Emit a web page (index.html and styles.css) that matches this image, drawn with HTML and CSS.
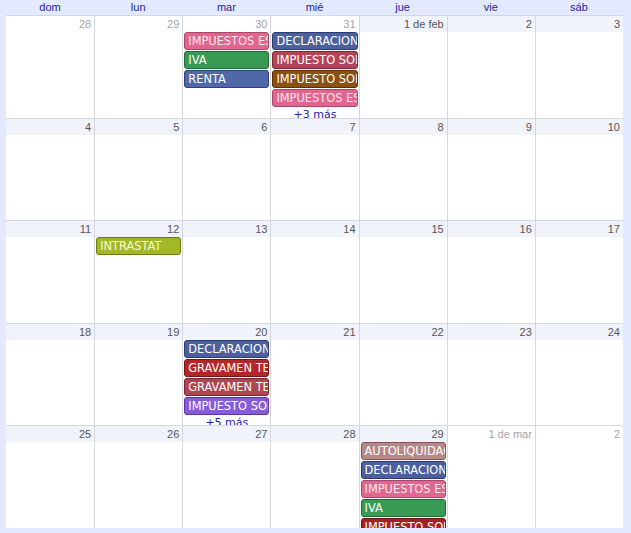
FILE: index.html
```html
<!DOCTYPE html>
<html lang="es">
<head>
<meta charset="utf-8">
<title>Calendario</title>
<link rel="stylesheet" href="styles.css">
</head>
<body>
<div class="cal">
  <div class="head">
    <div>dom</div><div>lun</div><div>mar</div><div>mié</div><div>jue</div><div>vie</div><div>sáb</div>
  </div>
  <div class="weeks">
    <div class="week">
      <div class="day out"><div class="num">28</div></div>
      <div class="day out"><div class="num">29</div></div>
      <div class="day out"><div class="num">30</div>
        <div class="ev pink">IMPUESTOS ESPECIALES</div>
        <div class="ev green">IVA</div>
        <div class="ev blue">RENTA</div>
      </div>
      <div class="day out"><div class="num">31</div>
        <div class="ev navy">DECLARACIONES INFORMATIVAS</div>
        <div class="ev crimson">IMPUESTO SOBRE SOCIEDADES</div>
        <div class="ev brown">IMPUESTO SOBRE LA RENTA</div>
        <div class="ev pink">IMPUESTOS ESPECIALES</div>
        <div class="more">+3 más</div>
      </div>
      <div class="day"><div class="num">1 de feb</div></div>
      <div class="day"><div class="num">2</div></div>
      <div class="day"><div class="num">3</div></div>
    </div>
    <div class="week">
      <div class="day"><div class="num">4</div></div>
      <div class="day"><div class="num">5</div></div>
      <div class="day"><div class="num">6</div></div>
      <div class="day"><div class="num">7</div></div>
      <div class="day"><div class="num">8</div></div>
      <div class="day"><div class="num">9</div></div>
      <div class="day"><div class="num">10</div></div>
    </div>
    <div class="week">
      <div class="day"><div class="num">11</div></div>
      <div class="day"><div class="num">12</div>
        <div class="ev olive">INTRASTAT</div>
      </div>
      <div class="day"><div class="num">13</div></div>
      <div class="day"><div class="num">14</div></div>
      <div class="day"><div class="num">15</div></div>
      <div class="day"><div class="num">16</div></div>
      <div class="day"><div class="num">17</div></div>
    </div>
    <div class="week">
      <div class="day"><div class="num">18</div></div>
      <div class="day"><div class="num">19</div></div>
      <div class="day"><div class="num">20</div>
        <div class="ev navy">DECLARACIONES INFORMATIVAS</div>
        <div class="ev red">GRAVAMEN TEMPORAL</div>
        <div class="ev rose">GRAVAMEN TEMPORAL</div>
        <div class="ev purple">IMPUESTO SOBRE SOCIEDADES</div>
        <div class="more">+5 más</div>
      </div>
      <div class="day"><div class="num">21</div></div>
      <div class="day"><div class="num">22</div></div>
      <div class="day"><div class="num">23</div></div>
      <div class="day"><div class="num">24</div></div>
    </div>
    <div class="week">
      <div class="day"><div class="num">25</div></div>
      <div class="day"><div class="num">26</div></div>
      <div class="day"><div class="num">27</div></div>
      <div class="day"><div class="num">28</div></div>
      <div class="day"><div class="num">29</div>
        <div class="ev mauve">AUTOLIQUIDACIÓN</div>
        <div class="ev navy">DECLARACIONES INFORMATIVAS</div>
        <div class="ev pink">IMPUESTOS ESPECIALES</div>
        <div class="ev green">IVA</div>
        <div class="ev darkred">IMPUESTO SOBRE SOCIEDADES</div>
      </div>
      <div class="day out"><div class="num">1 de mar</div></div>
      <div class="day out"><div class="num">2</div></div>
    </div>
  </div>
</div>
</body>
</html>
```
FILE: styles.css
```css
html, body {
  margin: 0;
  padding: 0;
  background: #e3e9fe;
}
.cal {
  padding: 0 8px 0 6px;
  font-family: "Liberation Sans", Arial, sans-serif;
  font-size: 11px;
}
.head {
  display: grid;
  grid-template-columns: repeat(7, 1fr);
  height: 15px;
  line-height: 15px;
  color: #2424a4;
  text-align: center;
}
.weeks {
  display: grid;
  grid-template-rows: 103px 102px 103px 102px 103px;
  background: #fff;
}
.week {
  display: grid;
  grid-template-columns: repeat(7, 1fr);
  border-top: 1px solid #d3d7e6;
  min-height: 0;
  overflow: hidden;
}
.day {
  border-left: 1px solid #d6d6d6;
  overflow: hidden;
  min-width: 0;
  display: flex;
  flex-direction: column;
}
.day:first-child {
  border-left: none;
}
.num {
  flex: none;
  height: 16px;
  line-height: 16px;
  text-align: right;
  padding-right: 3px;
  color: #555;
  background: #f1f3fb;
}
.out .num {
  background: #fff;
  color: #a3a3a3;
}
.ev {
  flex: none;
  height: 16px;
  line-height: 16px;
  margin: 0 1px 1px 1px;
  padding: 0 3px;
  border: 1px solid;
  border-radius: 3px;
  color: #fff;
  font-family: "DejaVu Sans", Tahoma, sans-serif;
  font-size: 11.4px;
  white-space: nowrap;
  overflow: hidden;
}
.more {
  flex: none;
  line-height: 13px;
  text-align: center;
  color: #2323a8;
  font-family: "DejaVu Sans", Tahoma, sans-serif;
  font-size: 11px;
}
.pink { background: #e0668f; border-color: #a9466a; color: #ffe6ee; }
.green { background: #389a54; border-color: #1e6a34; }
.blue { background: #5068a8; border-color: #2d4178; }
.navy { background: #4b619e; border-color: #2a3c72; }
.crimson { background: #b04658; border-color: #7a2636; }
.brown { background: #8c5012; border-color: #5a3004; }
.olive { background: #a2b828; border-color: #6b7b0f; color: #f7fbd8; }
.red { background: #b02828; border-color: #781414; }
.rose { background: #b24452; border-color: #7a2432; }
.purple { background: #865cd6; border-color: #5838a0; }
.mauve { background: #b88888; border-color: #865656; }
.darkred { background: #a62222; border-color: #701010; }
```
